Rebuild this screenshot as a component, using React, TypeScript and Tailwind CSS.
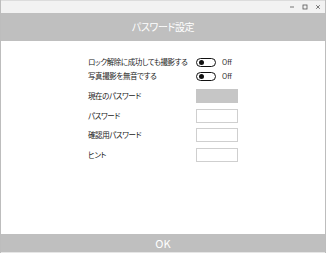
import React from 'react';

const font = { fontFamily: '"Noto Sans CJK JP", "Noto Sans", sans-serif', fontFeatureSettings: '"palt"' };

function Toggle() {
  return (
    <div className="flex items-center h-[14px]">
      <div className="w-[20px] h-[9px] rounded-full border border-[#111] flex items-center pl-[2px]">
        <div className="w-[5px] h-[5px] rounded-full bg-[#111]" />
      </div>
      <span className="ml-[6px] text-[7px] text-[#333] leading-none tracking-normal">Off</span>
    </div>
  );
}

export default function App() {
  const toggles = ['ロック解除に成功しても撮影する', '写真撮影を無音でする'];
  const fields = [
    { label: '現在のパスワード', filled: true },
    { label: 'パスワード', filled: false },
    { label: '確認用パスワード', filled: false },
    { label: 'ヒント', filled: false },
  ];

  return (
    <div className="w-[326px] h-[253px] flex flex-col bg-white overflow-hidden border-x border-[#bdbdbd]" style={font}>
      {/* タイトルバー */}
      <div className="h-[1px] bg-[#dcdcdc]" />
      <div className="h-[12px] bg-[#f2f2f2] flex items-center justify-end pr-[4px] gap-[7px] text-[#555]">
        <svg width="6" height="6" viewBox="0 0 6 6"><path d="M1 3h4" stroke="currentColor" strokeWidth="0.8" /></svg>
        <svg width="6" height="6" viewBox="0 0 6 6"><rect x="1" y="1" width="4" height="4" fill="none" stroke="currentColor" strokeWidth="0.8" /></svg>
        <svg width="6" height="6" viewBox="0 0 6 6"><path d="M1.2 1.2l3.6 3.6M4.8 1.2l-3.6 3.6" stroke="currentColor" strokeWidth="0.8" /></svg>
      </div>

      {/* ヘッダー */}
      <div className="h-[28px] bg-[#bfbfbf] flex items-center justify-center">
        <span className="text-white text-[10px] tracking-[-0.4px] leading-none">パスワード設定</span>
      </div>

      {/* 本文 */}
      <div className="flex-1 flex justify-center pt-[14px]">
        <div className="w-[150px] text-[7.5px] tracking-[-0.4px] text-[#222] leading-none">
          {toggles.map((t) => (
            <div key={t} className="grid grid-cols-[108px_1fr] items-center h-[14px]">
              <span className="whitespace-nowrap">{t}</span>
              <Toggle />
            </div>
          ))}
          <div className="mt-[6px] flex flex-col gap-[5.5px]">
            {fields.map((f) => (
              <div key={f.label} className="grid grid-cols-[108px_42px] items-center h-[14px]">
                <span className="whitespace-nowrap">{f.label}</span>
                <div
                  className={
                    f.filled
                      ? 'h-[14px] bg-[#c6c6c6] border border-[#c6c6c6]'
                      : 'h-[14px] bg-white border border-[#cfcfcf]'
                  }
                />
              </div>
            ))}
          </div>
        </div>
      </div>

      {/* フッター */}
      <div className="h-[18px] bg-[#bfbfbf] flex items-center justify-center">
        <span className="text-white text-[11px] leading-none">OK</span>
      </div>
      <div className="h-[1px] bg-[#e6e6e6]" />
    </div>
  );
}
